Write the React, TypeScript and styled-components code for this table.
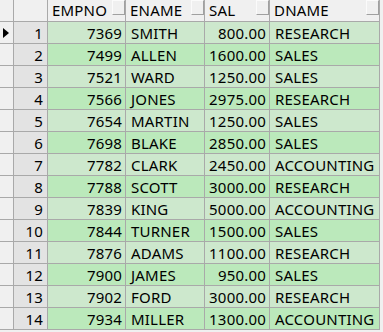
import React from 'react'
import styled, { createGlobalStyle } from 'styled-components'

const rows = [
  [7369, 'SMITH', '800.00', 'RESEARCH'],
  [7499, 'ALLEN', '1600.00', 'SALES'],
  [7521, 'WARD', '1250.00', 'SALES'],
  [7566, 'JONES', '2975.00', 'RESEARCH'],
  [7654, 'MARTIN', '1250.00', 'SALES'],
  [7698, 'BLAKE', '2850.00', 'SALES'],
  [7782, 'CLARK', '2450.00', 'ACCOUNTING'],
  [7788, 'SCOTT', '3000.00', 'RESEARCH'],
  [7839, 'KING', '5000.00', 'ACCOUNTING'],
  [7844, 'TURNER', '1500.00', 'SALES'],
  [7876, 'ADAMS', '1100.00', 'RESEARCH'],
  [7900, 'JAMES', '950.00', 'SALES'],
  [7902, 'FORD', '3000.00', 'RESEARCH'],
  [7934, 'MILLER', '1300.00', 'ACCOUNTING'],
]

const columns = [
  { title: 'EMPNO', align: 'right' },
  { title: 'ENAME', align: 'left' },
  { title: 'SAL', align: 'right' },
  { title: 'DNAME', align: 'left' },
]

const GlobalStyle = createGlobalStyle`
  html, body {
    margin: 0;
    padding: 0;
    background: #f0f0f0;
    width: 383px;
    height: 332px;
    overflow: hidden;
  }
`

const App = () => {
  return (
    <>
      <GlobalStyle />
      <Grid>
        <CornerCell />
        <CornerCell />
        {columns.map((c) => (
          <HeaderCell key={c.title}>
            <span>{c.title}</span>
            <FilterBox />
          </HeaderCell>
        ))}
        <Filler />
        {rows.map((r, i) => (
          <React.Fragment key={r[0]}>
            <IndicatorCell>{i === 0 && <Arrow />}</IndicatorCell>
            <RowNumCell>{i + 1}</RowNumCell>
            {r.map((v, j) => (
              <DataCell key={j} $alt={i % 2 === 1} $align={columns[j].align}>
                {v}
              </DataCell>
            ))}
            <Filler />
          </React.Fragment>
        ))}
      </Grid>
    </>
  )
}

const Grid = styled.div`
  display: grid;
  grid-template-columns: 14px 34px 78px 79px 65px 110px 1fr;
  grid-auto-rows: 22px;
  width: 383px;
  font-family: 'Noto Sans', 'Open Sans', sans-serif;
  font-size: 15px;
  letter-spacing: 0.2px;
  color: #000;
`

const Cell = styled.div`
  box-sizing: border-box;
  border-right: 1px solid #a9a9a9;
  border-bottom: 1px solid #a9a9a9;
  display: flex;
  align-items: center;
  white-space: nowrap;
  overflow: hidden;
`

const CornerCell = styled(Cell)`
  background: #f0f0f0;
`

const HeaderCell = styled(Cell)`
  background: #f0f0f0;
  justify-content: space-between;
  align-items: flex-start;
  padding-left: 4px;
  span {
    line-height: 21px;
  }
`

const FilterBox = styled.div`
  box-sizing: border-box;
  width: 13px;
  height: 15px;
  border-top: 1px solid #fbfbfb;
  border-left: 1px solid #fbfbfb;
  border-right: 1px solid #a0a0a0;
  border-bottom: 1px solid #a0a0a0;
  background: #f0f0f0;
  flex: none;
`

const Filler = styled.div`
  background: #f0f0f0;
`

const IndicatorCell = styled(Cell)`
  background: #f0f0f0;
  padding-left: 3px;
`

const Arrow = styled.div`
  width: 0;
  height: 0;
  border-top: 5px solid transparent;
  border-bottom: 5px solid transparent;
  border-left: 6px solid #000;
`

const RowNumCell = styled(Cell)`
  background: #e3e3e3;
  justify-content: flex-end;
  padding-right: 4px;
`

const DataCell = styled(Cell)<{ $alt: boolean; $align: string }>`
  background: ${(p) => (p.$alt ? '#bbe9bb' : '#cde8cd')};
  justify-content: ${(p) => (p.$align === 'right' ? 'flex-end' : 'flex-start')};
  padding: 0 3px 0 5px;
`

export default App
